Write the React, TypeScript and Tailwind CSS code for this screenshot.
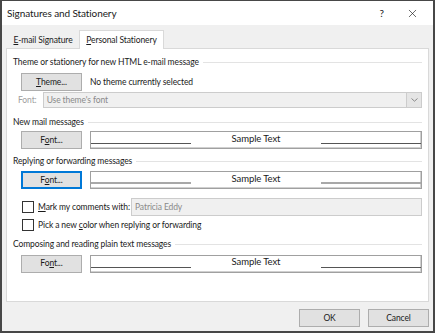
import { X } from "lucide-react";

function Heading({ title }: { title: string }) {
  return (
    <div className="flex items-center h-[14px] pl-[6px] pr-[6px]">
      <span className="whitespace-nowrap">{title}</span>
      <div className="flex-1 h-px bg-[#e3e3e3] ml-[4px]" />
    </div>
  );
}

function Btn({ children, focused, w = "w-[61px]" }: { children: React.ReactNode; focused?: boolean; w?: string }) {
  return (
    <div
      className={`${w} h-[18px] flex items-center justify-center bg-[#e1e1e1] border ${
        focused ? "border-[#0078d7] shadow-[inset_0_0_0_1px_#0078d7]" : "border-[#adadad]"
      }`}
    >
      {children}
    </div>
  );
}

function SampleRow({ underline, focused, thick }: { underline: React.ReactNode; focused?: boolean; thick?: boolean }) {
  return (
    <div className="flex items-center pl-[14px] pr-[6px] gap-[8px]">
      <Btn focused={focused}>{underline}</Btn>
      <div className="flex-1 h-[18px] border border-[#a0a0a0] shadow-[inset_-1px_-1px_0_#d0d0d0] flex items-end pb-[4px]">
        <div className={`w-[100px] ${thick ? "h-[2px] bg-[#a8a8a8]" : "h-px bg-[#555]"}`} />
        <div className="flex-1 flex justify-center leading-none pb-[1px] text-[9.5px]">Sample Text</div>
        <div className={`w-[100px] ${thick ? "h-[2px] bg-[#a8a8a8]" : "h-px bg-[#555]"}`} />
      </div>
    </div>
  );
}

function Check({ children }: { children: React.ReactNode }) {
  return (
    <div className="flex items-center gap-[4px] pl-[15px] whitespace-nowrap">
      <div className="w-[12px] h-[12px] bg-white border border-[#333] shrink-0" />
      <span>{children}</span>
    </div>
  );
}

export default function App() {
  return (
    <div
      className="w-[435px] h-[333px] bg-[#f0f0f0] border-x-2 border-b-2 border-t border-[#474747] flex flex-col text-[8.5px] tracking-[-0.1px] text-[#1a1a1a] overflow-hidden"
      style={{ fontFamily: "Lato, 'Noto Sans', sans-serif" }}
    >
      <div className="h-[24px] bg-white flex items-center pl-[5px] pr-[14px]">
        <span className="text-[10px] flex-1">Signatures and Stationery</span>
        <span className="text-[10px] mr-[22px]">?</span>
        <X size={13} strokeWidth={1.2} />
      </div>

      <div className="flex flex-col px-[4px] pt-[4px]">
        <div className="flex items-end h-[19px] pl-[1px]">
          <div className="h-[16px] w-[72px] flex items-center justify-center">
            <span><u>E</u>-mail Signature</span>
          </div>
          <div className="h-[19px] w-[85px] bg-white border-x border-t border-[#d9d9d9] -mb-px relative z-10 flex items-center justify-center">
            <span><u>P</u>ersonal Stationery</span>
          </div>
        </div>

        <div className="h-[254px] bg-white border border-[#d9d9d9] flex flex-col pt-[6px]">
          <Heading title="Theme or stationery for new HTML e-mail message" />
          <div className="flex items-center gap-[8px] pl-[14px] mt-[4px]">
            <Btn>
              <span><u>T</u>heme...</span>
            </Btn>
            <span>No theme currently selected</span>
          </div>
          <div className="flex items-center pl-[11px] pr-[6px] mt-[1px] gap-[6px]">
            <span className="text-[#a0a0a0]">Font:</span>
            <div className="flex-1 h-[16px] bg-[#f0f0f0] border border-[#cccccc] flex items-center">
              <span className="flex-1 pl-[3px] text-[#8a8a8a]">Use theme's font</span>
              <div className="w-[15px] h-[14px] border-l border-[#cccccc] bg-[#e5e5e5] flex items-center justify-center">
                <svg width="7" height="4" viewBox="0 0 7 4">
                  <path d="M0.5 0.5 L3.5 3.2 L6.5 0.5" stroke="#888" fill="none" strokeWidth="1" />
                </svg>
              </div>
            </div>
          </div>

          <div className="mt-[7px]">
            <Heading title="New mail messages" />
          </div>
          <div className="mt-[2px]">
            <SampleRow underline={<span>F<u>o</u>nt...</span>} />
          </div>

          <div className="mt-[5px]">
            <Heading title="Replying or forwarding messages" />
          </div>
          <div className="mt-[3px]">
            <SampleRow underline={<span>F<u>o</u>nt...</span>} focused thick />
          </div>

          <div className="flex items-center pr-[6px] mt-[9px]">
            <Check>
              <span><u>M</u>ark my comments with:</span>
            </Check>
            <div className="ml-auto w-[291px] h-[18px] bg-[#f0f0f0] border border-[#cccccc] flex items-center pl-[3px] text-[#8a8a8a]">
              Patricia Eddy
            </div>
          </div>
          <div className="mt-[3px]">
            <Check>
              <span>Pick a new <u>c</u>olor when replying or forwarding</span>
            </Check>
          </div>

          <div className="mt-[6px]">
            <Heading title="Composing and reading plain text messages" />
          </div>
          <div className="mt-[3px]">
            <SampleRow underline={<span>Fo<u>n</u>t...</span>} />
          </div>
        </div>

        <div className="flex justify-end gap-[8px] mt-[7px]">
          <Btn>OK</Btn>
          <Btn>Cancel</Btn>
        </div>
      </div>
    </div>
  );
}
